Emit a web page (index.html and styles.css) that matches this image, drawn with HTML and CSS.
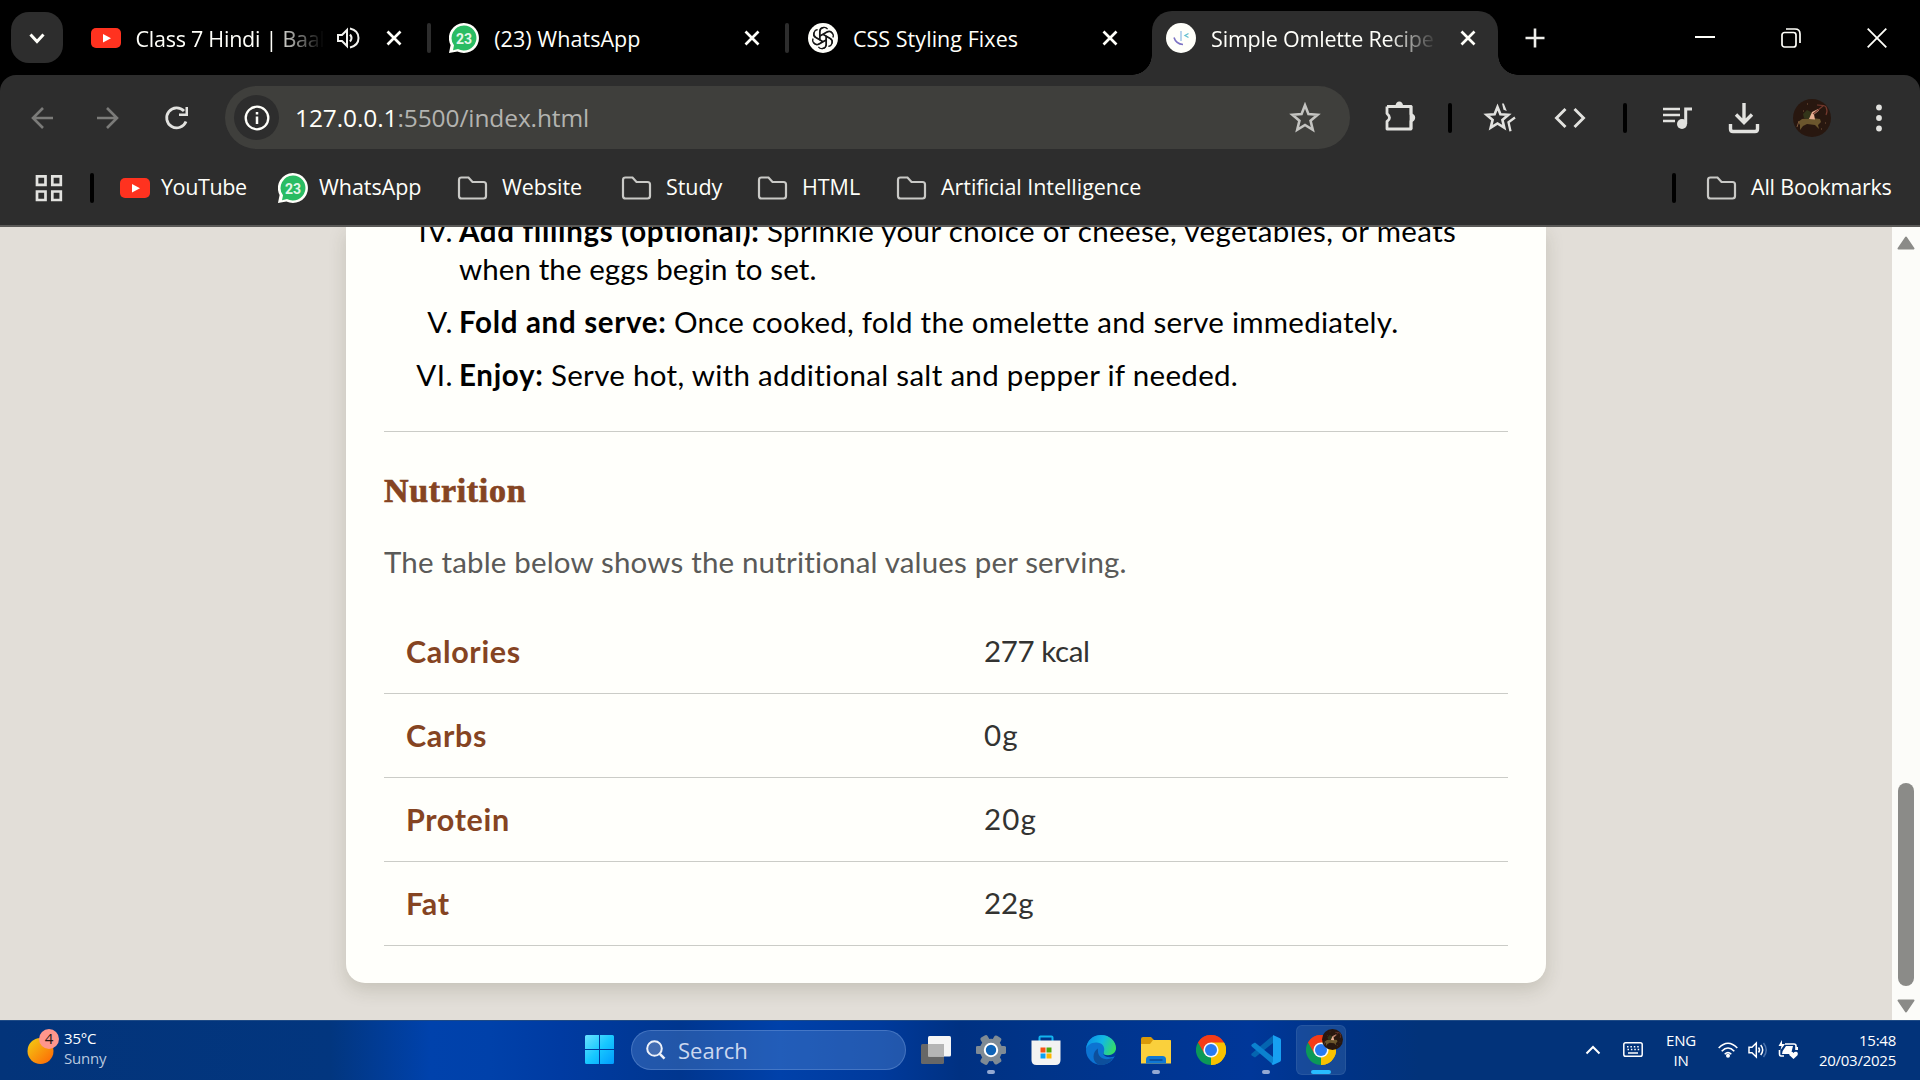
FILE: index.html
```html
<!DOCTYPE html>
<html lang="en">
<head>
<meta charset="utf-8">
<title>Simple Omlette Recipe</title>
<link rel="stylesheet" href="styles.css">
</head>
<body>
<svg class="defs" width="0" height="0">
  <symbol id="youtube" viewBox="0 0 30 20"><rect width="30" height="20" rx="5" fill="#ff321f"/><path d="M12 6l8 4.2-8 4.3z" fill="#fff"/></symbol>
  <symbol id="whatsapp" viewBox="0 0 30 30"><path d="M15 0a15 15 0 1 1-6.600 28.500L0 30l1.600-8A15 15 0 0 1 15 0z" fill="#fffffa"/><path d="M15 2.500a12.500 12.500 0 1 1-6 23.500L4 27.300l1-5A12.500 12.500 0 0 1 15 2.500z" fill="#2abc63"/><text x="15" y="20.500" text-anchor="middle" class="wa-num">23</text></symbol>
  <symbol id="folder" viewBox="0 0 30 24"><path d="M1.500 4q0-2.500 2.500-2.500h7l4 4.500h11q2.500 0 2.500 2.500v11.500q0 2.500-2.500 2.500H4Q1.500 22.500 1.500 20z" fill="none" stroke="#c9c9c6" stroke-width="2.200"/></symbol>
  <symbol id="close" viewBox="0 0 20 20"><path d="M3.500 3.500l13 13M16.500 3.500l-13 13" stroke="#fffffa" stroke-width="2.700"/></symbol>
  <symbol id="star" viewBox="0 0 30 30"><path d="M15 3l3.200 8.300 8.600.6-6.600 5.600 2.100 8.500L15 21.500 7.700 26l2.100-8.500-6.600-5.600 8.600-.6z" fill="none" stroke="currentColor" stroke-width="2.400"/></symbol>
  <symbol id="archer" viewBox="0 0 38 38"><circle cx="19" cy="19" r="19" fill="#28170f"/><path d="M5 23l4-3 10-1 8 1 1 3-3 3 1 4-4-4-8-1-4 2-3 4 0-5z" fill="#6b562d"/><path d="M10 15l4-4 4 2 1 4-4 3-4-1z" fill="#33351a"/><path d="M16 20l3-7 6-3 1 1.500-5 4 1 5z" fill="#e8b092"/><path d="M20 15l10-8M24 6q8 0 9 2 2 4 0 8" fill="none" stroke="#74392e" stroke-width="1.200"/><path d="M6 22l-2 6M10 12h1M32 24h1M28 30h1M14 5h1" stroke="#7c573c"/></symbol>
  <symbol id="chrome" viewBox="0 0 30 30"><path d="M15 15L2.010 7.500A15 15 0 0 1 27.990 7.500z" fill="#f43c18"/><path d="M15 15L28 7.500A15 15 0 0 1 15 30z" fill="#f9c200"/><path d="M15 15v15A15 15 0 0 1 2 7.500z" fill="#0b9958"/><path d="M15 7.500h13a15 15 0 0 0-26 0l6.500 11.300z" fill="#f43c18"/><path d="M15 7.500h13A15 15 0 0 1 15 30l6.500-11.200z" fill="#f9c200"/><circle cx="15" cy="15" r="7.600" fill="#f4f7fb"/><circle cx="15" cy="15" r="6" fill="#287af0"/></symbol>
</svg>

<div class="screen">
  <header class="tabs">
    <button class="tab-search"><svg width="20" height="16" viewBox="0 0 20 16"><path d="M3.500 4.500L10 11.500l6.500-7" fill="none" stroke="#fffffa" stroke-width="3"/></svg></button>
    <div class="tab">
      <svg class="fav" width="30" height="20"><use href="#youtube"/></svg>
      <span class="title fade t1">Class 7 Hindi | Baal</span>
      <svg class="sound" width="24" height="24" viewBox="0 0 24 24" fill="none" stroke="#f2f2ef" stroke-width="2"><path d="M2 9h4l5-5v16l-5-5H2z"/><path d="M14 8.500q3 3.500 0 7M14 2.500q8.500 2 8.500 9.500t-8.500 9.500"/></svg>
      <svg class="x" width="20" height="20"><use href="#close"/></svg><i class="sep"></i>
    </div>
    <div class="tab">
      <svg class="fav" width="30" height="30"><use href="#whatsapp"/></svg>
      <span class="title">(23) WhatsApp</span>
      <svg class="x" width="20" height="20"><use href="#close"/></svg><i class="sep"></i>
    </div>
    <div class="tab">
      <svg class="fav" width="30" height="30" viewBox="0 0 30 30"><circle cx="15" cy="15" r="15" fill="#fffffa"/><g fill="none" stroke="#161616" stroke-width="1.300"><path id="petal" d="M12 17.300V8.600a4.200 4.200 0 0 1 7.600-2.400M12 12.800l6.800-3.900a4.200 4.200 0 0 1 5.600 1.400"/><use href="#petal" transform="rotate(60 15 15)"/><use href="#petal" transform="rotate(120 15 15)"/><use href="#petal" transform="rotate(180 15 15)"/><use href="#petal" transform="rotate(240 15 15)"/><use href="#petal" transform="rotate(300 15 15)"/></g></svg>
      <span class="title">CSS Styling Fixes</span>
      <svg class="x" width="20" height="20"><use href="#close"/></svg>
    </div>
    <div class="tab active">
      <svg class="fav" width="30" height="30" viewBox="0 0 30 30"><circle cx="15" cy="15" r="15" fill="#fffffa"/><path d="M8 14.500q2 6.500 9 7" fill="none" stroke="#7d73c4" stroke-width="1.600"/><path d="M15 8v10" stroke="#a9cbea" stroke-width="1.600"/><path d="M22.500 10.500l-3.500 2 3.500 2" fill="none" stroke="#62bfd0" stroke-width="1.300"/></svg>
      <span class="title fade t4">Simple Omlette Recipe</span>
      <svg class="x" width="20" height="20"><use href="#close"/></svg>
    </div>
    <svg class="plus" width="20" height="20" viewBox="0 0 20 20"><path d="M10 0.500v19M0.500 10h19" stroke="#eeeeeb" stroke-width="2.600"/></svg>
    <div class="win">
      <svg width="20" height="20" viewBox="0 0 20 20"><path d="M0 9h20" stroke="#fffffa" stroke-width="2"/></svg>
      <svg width="20" height="20" viewBox="0 0 20 20" fill="none" stroke="#fffffa" stroke-width="1.700"><rect x="1" y="4.500" width="14" height="14.500" rx="2.500"/><path d="M5 1h9q5 0 5 5v9"/></svg>
      <svg width="20" height="20" viewBox="0 0 20 20"><path d="M.7.700l18.600 18.600M19.300.7L.7 19.300" stroke="#fffffa" stroke-width="1.800"/></svg>
    </div>
  </header>

  <div class="chrome">
    <nav class="toolbar">
      <svg class="back" width="24" height="24" viewBox="0 0 24 24" fill="none" stroke="#7b7b79" stroke-width="2.600"><path d="M23 12H3M13 2L3 12l10 10"/></svg>
      <svg class="fwd" width="24" height="24" viewBox="0 0 24 24" fill="none" stroke="#7b7b79" stroke-width="2.600"><path d="M1 12h20M11 2l10 10-10 10"/></svg>
      <svg class="reload" width="26" height="26" viewBox="0 0 26 26"><path d="M22 16.500a10 10 0 1 1-2-10.500" fill="none" stroke="#e2e2df" stroke-width="2.800"/><path d="M24 2v9h-9v-2.500h6.500V2z" fill="#e2e2df"/></svg>
      <div class="omnibox">
        <span class="info"><svg width="26" height="26" viewBox="0 0 26 26"><circle cx="13" cy="13" r="11.300" fill="none" stroke="#fffffa" stroke-width="2.300"/><path d="M13 11.500v7.500M13 7v2.600" stroke="#fffffa" stroke-width="2.500"/></svg></span>
        <span class="url"><b>127.0.0.1</b>:5500/index.html</span>
        <svg class="bookmark" width="32" height="32"><use href="#star"/></svg>
      </div>
      <svg class="ext" width="34" height="32" viewBox="0 0 34 32"><path d="M4 6.500h24v8.200M28 20.500v8.500H4v-7.500q5-3.500 0-8V6.500" fill="none" stroke="#e2e2df" stroke-width="2.800" stroke-linejoin="round"/><path d="M28 6v23" stroke="#e2e2df" stroke-width="2.800"/><path d="M28 13.500a4.200 4.200 0 0 1 0 8.400zM12.500 6a3.800 4.500 0 0 1 7.600 0z" fill="#e2e2df"/></svg>
      <i class="bar b1"></i>
      <svg class="stars" width="34" height="34" viewBox="0 0 34 34"><path d="M15.500 6l2.900 7.200 8 .6-6 5.100 1.900 7.800-6.800-4.200-6.800 4.200 1.900-7.800-6-5.100 8-.6z" fill="none" stroke="#e2e2df" stroke-width="2.600"/><path d="M20 2.500h1.800l3 7.500-3.300-1.200z" fill="#e2e2df"/><path d="M33 16.500l-6.500 4.700 2 9" fill="none" stroke="#e2e2df" stroke-width="2.300"/></svg>
      <svg class="code" width="32" height="24" viewBox="0 0 32 24"><path d="M11.500 3L2.500 12l9 9M20.500 3l9 9-9 9" fill="none" stroke="#e2e2df" stroke-width="2.900"/></svg>
      <i class="bar b2"></i>
      <svg class="music" width="30" height="24" viewBox="0 0 30 24"><path d="M0 3h17M0 9h17M0 15h12" stroke="#e2e2df" stroke-width="2.500"/><circle cx="19" cy="18" r="5" fill="#e2e2df"/><path d="M22.700 18V3H29" fill="none" stroke="#e2e2df" stroke-width="3"/></svg>
      <svg class="down" width="32" height="32" viewBox="0 0 32 32" fill="none" stroke="#e2e2df" stroke-width="3.400"><path d="M16 1v19M8 12.500l8 8 8-8M2.500 22v5q0 2.500 2.500 2.500h22q2.500 0 2.500-2.500v-5"/></svg>
      <svg class="avatar" width="38" height="38"><use href="#archer"/></svg>
      <svg class="dots" width="8" height="28" viewBox="0 0 8 28" fill="#e2e2df"><circle cx="4" cy="3.500" r="2.900"/><circle cx="4" cy="14" r="2.900"/><circle cx="4" cy="24.500" r="2.900"/></svg>
    </nav>
    <nav class="bookmarks">
      <svg class="apps" width="28" height="28" viewBox="0 0 28 28" fill="none" stroke="#e2e2df" stroke-width="2.700"><path d="M2 2.300h8.500v8.500H2zM17.300 2.300h8.500v8.500h-8.500zM2 17.500h8.500V26H2zM17.300 17.500h8.500V26h-8.500z"/></svg>
      <i class="bar b3"></i>
      <a class="bm w1"><svg width="30" height="20"><use href="#youtube"/></svg><span>YouTube</span></a>
      <a class="bm w2"><svg width="30" height="30"><use href="#whatsapp"/></svg><span>WhatsApp</span></a>
      <a class="bm dir w3"><svg width="31" height="24"><use href="#folder"/></svg><span>Website</span></a>
      <a class="bm dir w4"><svg width="31" height="24"><use href="#folder"/></svg><span>Study</span></a>
      <a class="bm dir w5"><svg width="31" height="24"><use href="#folder"/></svg><span>HTML</span></a>
      <a class="bm dir w6"><svg width="31" height="24"><use href="#folder"/></svg><span>Artificial Intelligence</span></a>
      <i class="bar b4"></i>
      <a class="bm dir w7"><svg width="31" height="24"><use href="#folder"/></svg><span>All Bookmarks</span></a>
    </nav>
  </div>

  <div class="viewport">
    <main class="page">
      <article class="card">
        <ol class="steps">
          <li><span class="num">IV.</span><p><strong>Add fillings (optional):</strong> <span class="r1">Sprinkle your choice of cheese, vegetables, or meats</span><br><span class="r2">when the eggs begin to set.</span></p></li>
          <li><span class="num">V.</span><p><strong>Fold and serve:</strong> <span class="r3">Once cooked, fold the omelette and serve immediately.</span></p></li>
          <li><span class="num">VI.</span><p><strong>Enjoy:</strong> <span class="r4">Serve hot, with additional salt and pepper if needed.</span></p></li>
        </ol>
        <hr>
        <h2>Nutrition</h2>
        <p class="lead">The table below shows the nutritional values per serving.</p>
        <table>
          <tr><th>Calories</th><td class="tight">277 kcal</td></tr>
          <tr><th>Carbs</th><td class="wide">0g</td></tr>
          <tr><th>Protein</th><td class="wide">20g</td></tr>
          <tr><th>Fat</th><td>22g</td></tr>
        </table>
      </article>
    </main>
    <aside class="scroll">
      <svg width="18" height="14" viewBox="0 0 18 14"><path d="M9 1.500L16.500 12.500h-15z" fill="#8b8b88" stroke="#8b8b88" stroke-width="2" stroke-linejoin="round"/></svg>
      <i class="thumb"></i>
      <svg width="18" height="14" viewBox="0 0 18 14"><path d="M9 12.500L1.500 1.500h15z" fill="#8b8b88" stroke="#8b8b88" stroke-width="2" stroke-linejoin="round"/></svg>
    </aside>
  </div>

  <footer class="taskbar">
    <div class="weather">
      <svg width="36" height="38" viewBox="0 0 36 38"><defs><linearGradient id="sun" x1="0" y1="0" x2="1" y2="1"><stop offset=".1" stop-color="#f3c512"/><stop offset="1" stop-color="#ff6205"/></linearGradient></defs><circle cx="13.500" cy="23" r="13" fill="url(#sun)"/><circle cx="22" cy="11" r="10" fill="#ff968c"/><text x="22" y="16" text-anchor="middle" class="badge-num">4</text></svg>
      <div><span>35°C</span><span class="dim">Sunny</span></div>
    </div>
    <div class="apps-row">
      <svg class="start" width="30" height="30" viewBox="0 0 30 30"><defs><linearGradient id="win" x1="0" y1="0" x2="1" y2="1"><stop offset="0" stop-color="#6be2ff"/><stop offset=".5" stop-color="#17c8ff"/><stop offset="1" stop-color="#009cff"/></linearGradient></defs><path d="M0 1.500Q0 0 1.500 0H14v14H0zM15 0h12.500Q29 0 29 1.500V14H15zM0 15h14v14H1.500Q0 29 0 27.500zM15 15h14v12.500q0 1.500-1.500 1.500H15z" fill="url(#win)"/></svg>
      <div class="search"><svg width="20" height="20" viewBox="0 0 20 20" fill="none" stroke="#eef2fa" stroke-width="2"><circle cx="8.500" cy="8.500" r="7.300" fill="#8099c4" fill-opacity=".35"/><path d="M13.800 13.800l4.700 4.900" stroke-width="2.500"/></svg><span>Search</span></div>
      <div class="app"><svg width="30" height="30" viewBox="0 0 30 30"><rect y="9" width="23" height="20" rx="1.500" fill="#676767"/><rect x="7" y="1" width="23" height="20.500" rx="1.500" fill="#f5f5f5"/><path d="M7 9h16v12.500H7z" fill="#b5b5b5"/></svg></div>
      <div class="app run"><svg width="30" height="30" viewBox="0 0 30 30"><g fill="#7f8b95"><circle cx="15" cy="15" r="11.300"/><rect x="11" y="-.3" width="8" height="31" rx="2.200" transform="rotate(30 15 15)"/><rect x="11" y="-.3" width="8" height="31" rx="2.200" transform="rotate(90 15 15)"/><rect x="11" y="-.3" width="8" height="31" rx="2.200" transform="rotate(150 15 15)"/></g><circle cx="15" cy="15" r="6.200" fill="#0f64b8" stroke="#fff" stroke-width="2"/></svg></div>
      <div class="app"><svg width="30" height="30" viewBox="0 0 30 30"><path d="M8.500 7V2.500q0-1 1-1h11q1 0 1 1V7" fill="none" stroke="#12b4ef" stroke-width="2"/><path d="M.5 5.500h29V25q0 5-5 5h-19q-5 0-5-5z" fill="#f3f3f2"/><path d="M9.500 12.500h5v5h-5z" fill="#f65314"/><path d="M15.500 12.500h5v5h-5z" fill="#4fa80a"/><path d="M9.500 18.500h5v5h-5z" fill="#0aa1f2"/><path d="M15.500 18.500h5v5h-5z" fill="#fcb700"/></svg></div>
      <div class="app"><svg width="30" height="30" viewBox="0 0 30 30"><defs><linearGradient id="edge" x1="0" y1=".3" x2="1" y2=".6"><stop offset="0" stop-color="#0b8fe8"/><stop offset=".5" stop-color="#12b9e4"/><stop offset="1" stop-color="#36dd63"/></linearGradient></defs><circle cx="15" cy="15" r="15" fill="#0c73d2"/><path d="M12 13.500c-1 8 5 13 15 9.500-3 5-8 7.500-13 7-8-1.500-8.500-13-2-16.500z" fill="#0d4f9c"/><path d="M17.500 17c-1.500 4 4 6.500 11 4.500L30 19l2-4-8-1z" fill="#00389a"/><path d="M0 14C1 5 7 0 15 0c9 0 15 6.500 15 13 0 4.500-3.500 7.200-8 7.200-3.500 0-5-1-4.500-2.700 2-3 .5-9.500-6.500-10C5.500 7 1.500 10 0 14z" fill="url(#edge)"/></svg></div>
      <div class="app run"><svg width="30" height="30" viewBox="0 0 30 30"><path d="M0 4q0-2 2-2h8l3 3h17v4H0z" fill="#d99a09"/><path d="M0 9h9l3-4h16.500Q30 5 30 6.500V28.500H0z" fill="#fad03c"/><path d="M5 28.500v-4q0-3.500 3.500-3.500h13q3.500 0 3.500 3.500v4z" fill="#0f78d4"/><path d="M8.500 25h13" stroke="#0b4b96" stroke-width="1.600"/></svg></div>
      <div class="app"><svg width="30" height="30"><use href="#chrome"/></svg></div>
      <div class="app run"><svg width="30" height="30" viewBox="0 0 30 30"><path d="M22 8L4 22.500 1 20.800q-1.500-1.300 0-2.500L22 .5z" fill="#0465b0"/><path d="M22 22L4 7.500 1 9.200q-1.500 1.300 0 2.500L22 29.500z" fill="#0b82cf"/><path d="M22 0l7 3.300q1 .5 1 2v19.400q0 1.500-1 2L22 30l-1.500-1 1.500-2z" fill="#17a0f2"/></svg></div>
      <div class="app current"><svg width="30" height="30"><use href="#chrome"/></svg><svg class="badge" width="21" height="21"><use href="#archer"/></svg></div>
    </div>
    <div class="tray">
      <svg class="up" width="16" height="10" viewBox="0 0 16 10"><path d="M1.500 8.500L8 2l6.500 6.500" fill="none" stroke="#fff" stroke-width="2"/></svg>
      <svg class="kbd" width="20" height="16" viewBox="0 0 20 16" fill="none" stroke="#fff"><rect x=".8" y=".8" width="18.400" height="13.400" rx="1.800" stroke-width="1.500"/><path d="M4 4.800h12M4.500 7.600h12" stroke-width="1.500" stroke-dasharray="1.500 1.900"/><path d="M5 11h10" stroke-width="1.500"/></svg>
      <div class="lang"><span>ENG</span><span>IN</span></div>
      <svg class="wifi" width="20" height="16" viewBox="0 0 20 16" fill="none" stroke="#fff" stroke-width="1.600"><path d="M.7 6q9.300-9.500 18.600 0M3.700 9.200q6.300-6.500 12.600 0M6.700 12.200q3.300-3.200 6.600 0"/><circle cx="10" cy="13.700" r="1.200" fill="#fff"/></svg>
      <svg class="vol" width="20" height="18" viewBox="0 0 20 18" fill="none" stroke="#fff" stroke-width="1.500"><path d="M1 6.300h3L8.300 2v14L4 11.700H1zM10.500 6.500q2 2.500 0 5M12.700 4q4 5 0 10"/><path d="M15.500 2q5.500 7 0 14" stroke="#4b72ab"/></svg>
      <svg class="bat" width="21" height="20" viewBox="0 0 21 20"><path d="M7 4h9q2 0 2 2v4M6 16H3q-1.500 0-1.500-2v-4" fill="none" stroke="#fff" stroke-width="1.600"/><path d="M8 6h7l-2 8H4q0-3 2-5z" fill="#fff"/><path d="M4 0l-3.500 6h3l-1 4 4.500-6H4z" fill="#fff"/><path d="M15.500 19l-4-3.800q-1-2.500 1-3.400 2-.5 3 1.200 1-1.700 3-1.200 2 .9 1 3.400z" fill="#fff"/><path d="M18 7h2v3h-2z" fill="#fff"/></svg>
      <div class="clock"><span>15:48</span><span>20/03/2025</span></div>
    </div>
  </footer>
</div>
</body>
</html>
```
FILE: styles.css
```css
* { box-sizing: border-box; }
body { margin: 0; overflow: hidden; font-family: "Open Sans", "Noto Sans", sans-serif; }
svg { display: block; flex: none; }
.defs { position: absolute; }
.screen { width: 1920px; height: 1080px; display: flex; flex-direction: column; background: #000; }
.wa-num { font: 700 14px Roboto, sans-serif; fill: #e4f7e9; }

/* Tab strip */
.tabs { height: 75px; flex: none; display: flex; align-items: flex-start; color: #fffffa; }
.tab-search { margin: 12px 11px 0; width: 52px; height: 51px; border: 0; border-radius: 18px; background: #2d2d2d; display: grid; place-items: center; padding: 0; }
.tab { width: 358.7px; height: 53px; margin-top: 11px; padding-left: 16.500px; display: flex; align-items: center; flex: none; }
.title { margin-left: 15px; flex: 1; min-width: 0; overflow: hidden; white-space: nowrap; font-size: 21.500px; line-height: 34px; padding-top: 2px; letter-spacing: .05px; }
.fade { -webkit-mask-image: linear-gradient(90deg, #000 calc(100% - 50px), transparent); mask-image: linear-gradient(90deg, #000 calc(100% - 50px), transparent); }
.tab .t1 { letter-spacing: -.25px; margin-right: 12px; }
.tab .t4 { letter-spacing: -.2px; }
.sound { margin-right: 24px; }
.sep { width: 4px; height: 30px; border-radius: 2px; background: #2d2d2d; margin: 0 2px 0 23px; }
.tab:nth-child(4) .x { margin-right: 30px; }
.active { position: relative; width: 346px; height: 64px; padding: 0 20px 11px 14px; background: #2d2d2d; border-radius: 20px 20px 0 0; margin-left: 2px; }
.active .title { margin-right: 20px; }
.active::before, .active::after { content: ""; position: absolute; bottom: 0; width: 20px; height: 20px; }
.active::before { left: -20px; background: radial-gradient(circle at 0 0, transparent 19.500px, #2d2d2d 20px); }
.active::after { right: -20px; background: radial-gradient(circle at 100% 0, transparent 19.500px, #2d2d2d 20px); }
.plus { margin: 28px 0 0 27px; }
.win { margin: 28px 33px 0 auto; display: flex; gap: 66px; }

/* Toolbar */
.chrome { height: 152px; flex: none; background: #2d2d2d; border-radius: 16px 16px 0 0; border-bottom: 2px solid #5a5957; }
.toolbar { height: 86px; display: flex; align-items: center; }
.back { margin-left: 30px; }
.fwd { margin-left: 42px; }
.reload { margin-left: 44px; }
.omnibox { margin-left: 35px; width: 1125px; height: 63px; border-radius: 32px; background: #3f3f3c; display: flex; align-items: center; padding: 0 29px 0 9px; margin-top: -1px; }
.info { width: 45px; height: 45px; border-radius: 50%; background: #2d2d2d; display: grid; place-items: center; }
.url { margin: -1px 0 0 16px; font-size: 24.500px; color: #b3b3b0; flex: 1; letter-spacing: -.1px; }
.url b { font-weight: 400; color: #fffffa; }
.bookmark { color: #c4c4c1; }
.ext { margin-left: 33px; margin-top: -4px; }
.bar { width: 4px; height: 30px; border-radius: 2px; background: #000; flex: none; }
.b1 { margin-left: 31px; }
.stars { margin-left: 30px; }
.code { margin-left: 38px; }
.b2 { margin-left: 37px; }
.music { margin-left: 36px; }
.down { margin-left: 35px; }
.avatar { margin-left: 33px; }
.dots { margin-left: 44px; }

/* Bookmarks */
.bookmarks { height: 54px; display: flex; align-items: center; color: #fffffa; font-size: 21.500px; letter-spacing: -.05px; white-space: nowrap; }
.apps { margin-left: 35px; }
.b3 { margin-left: 27px; }
.bm { display: flex; align-items: center; gap: 11px; flex: none; }
.bm span { margin-top: -4px; }
.dir { gap: 14px; }
.w1 { margin-left: 26px; width: 158px; letter-spacing: -.4px; }
.w2 { width: 179px; }
.w3 { width: 164px; }
.w4 { width: 136px; }
.w5 { width: 139px; }
.b4 { margin-left: auto; }
.w7 { margin-left: 30px; width: 214px; letter-spacing: -.2px; }

/* Web page */
.viewport { flex: 1; min-height: 0; display: flex; background: #e2ded8; }
.page { flex: 1; overflow: hidden; padding: 0 346px; height: 793px; }
.card { height: 756px; background: #fffffb; border-radius: 0 0 19px 19px; padding: 0 38px; box-shadow: 0 7px 18px rgba(60, 60, 30, .17); font-family: Lato, sans-serif; font-size: 29.500px; line-height: 38px; color: #000; display: flow-root; }
.steps { list-style: none; margin: -15px 0 0; padding: 0; }
.steps li { display: flex; margin-bottom: 15px; white-space: nowrap; }
.num { width: 75px; padding-right: 6px; text-align: right; flex: none; letter-spacing: .5px; }
.steps p { margin: 0; }
.steps strong { letter-spacing: .68px; }
.r1 { letter-spacing: .38px; }
.r2 { letter-spacing: .09px; }
.r3 { letter-spacing: .25px; }
.r4 { letter-spacing: .31px; }
hr { margin: 37px 0 0; border: 0; border-top: 1px solid #cbccc7; }
h2 { margin: 37px 0 0; font: 700 34px/44px "Liberation Serif", serif; color: #854422; letter-spacing: .7px; -webkit-text-stroke: .7px #854422; }
.lead { margin: 30px 0 0; color: #5a5a58; letter-spacing: .17px; }
table { width: 100%; margin-top: 28px; border-collapse: collapse; table-layout: fixed; }
tr { border-bottom: 1px solid #cbccc7; }
th, td { height: 84px; padding: 0 0 0 22px; text-align: left; color: #333331; }
th { width: 578px; color: #854422; font-size: 30.500px; letter-spacing: .65px; }
.tight { letter-spacing: -.4px; }
.wide { letter-spacing: 1.200px; }
.scroll { width: 28px; background: #fcfcf9; display: flex; flex-direction: column; align-items: center; padding: 9px 0 7px; }
.thumb { width: 16px; height: 203px; border-radius: 8px; background: #8b8b88; margin: auto 0 13px; }

/* Taskbar */
.taskbar { height: 60px; flex: none; display: grid; grid-template-columns: 585px 761px 1fr; align-items: center; color: #fff; border-top: 1px solid #1f4b86; background: linear-gradient(90deg, #03347a 0, #02367f 330px, #0042ac 430px, #0041aa 490px, #003ba2 560px, #00368f 680px, #0041aa 780px, #003a9c 880px, #003182 960px, #003489 1040px, #003799 1250px, #003385 1350px, #02337a 1420px); }
.weather { display: flex; align-items: center; padding-left: 27px; font-size: 15px; line-height: 20px; letter-spacing: -.2px; }
.weather svg { margin-top: -8px; }
.weather div { display: flex; flex-direction: column; margin: -5px 0 0 1px; }
.lang span, .clock span { display: block; }
.dim { color: #b9c8df; }
.badge-num { font: 15px "Open Sans", sans-serif; fill: #2a1715; }
.apps-row { display: flex; align-items: center; margin-top: -1px; }
.search { margin-left: 16px; width: 275px; height: 40px; border-radius: 20px; background: rgba(90, 140, 210, .38); border: 1px solid rgba(120, 160, 220, .4); display: flex; align-items: center; gap: 12px; padding-left: 14px; font-size: 22px; color: #ccd8ef; margin-right: 5px; }
.app { position: relative; width: 50px; height: 50px; margin-right: 5px; display: grid; place-items: center; border-radius: 6px; flex: none; }
.run::after, .current::after { content: ""; position: absolute; bottom: 1px; left: 21px; width: 8px; height: 4px; border-radius: 2px; background: #93a9d3; }
.current { background: rgba(90, 140, 190, .25); border: 1px solid rgba(130, 160, 200, .15); margin-right: 0; }
.current::after { left: 14px; bottom: 0; width: 20px; background: #28bdff; }
.badge { position: absolute; top: 3px; left: 25px; }
.tray { display: flex; align-items: center; padding-right: 24px; font-size: 15px; line-height: 20px; letter-spacing: -.25px; margin-top: -2px; }
.up { margin-left: 239px; }
.kbd { margin-left: 22px; }
.lang { width: 40px; margin-left: 18px; text-align: center; }
.wifi { margin-left: 17px; }
.vol { margin-left: 10px; }
.bat { margin-left: 10px; }
.clock { margin-left: auto; text-align: right; }
```
